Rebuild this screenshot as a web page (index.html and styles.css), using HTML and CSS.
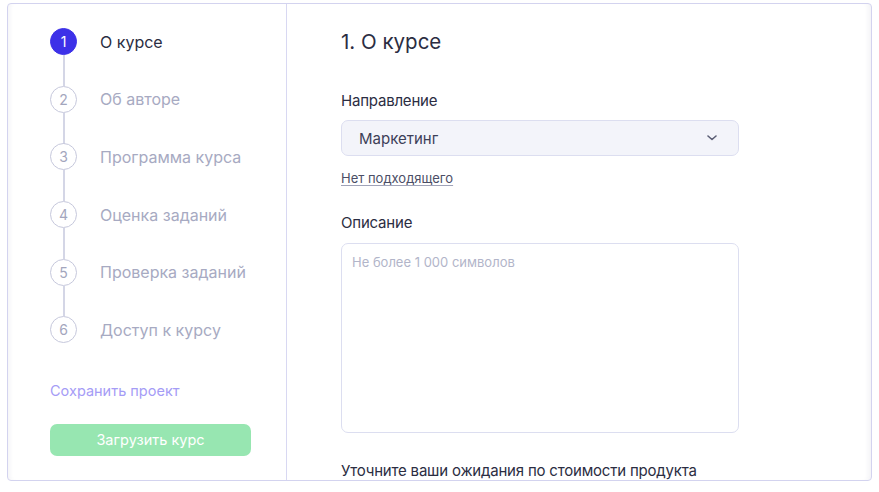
FILE: index.html
```html
<!DOCTYPE html>
<html lang="ru">
<head>
<meta charset="utf-8">
<link rel="stylesheet" href="styles.css">
</head>
<body>
<div class="card">
  <aside class="sidebar">
    <ol class="steps">
      <li class="step active"><span class="num">1</span><span class="label">О курсе</span></li>
      <li class="step"><span class="num">2</span><span class="label">Об авторе</span></li>
      <li class="step"><span class="num">3</span><span class="label">Программа курса</span></li>
      <li class="step"><span class="num">4</span><span class="label">Оценка заданий</span></li>
      <li class="step"><span class="num">5</span><span class="label">Проверка заданий</span></li>
      <li class="step last"><span class="num">6</span><span class="label">Доступ к курсу</span></li>
    </ol>
    <a class="save">Сохранить проект</a>
    <button class="upload">Загрузить курс</button>
  </aside>
  <main class="main">
    <h1 class="title">1. О курсе</h1>
    <div class="field-label first">Направление</div>
    <div class="select">
      <span>Маркетинг</span>
      <svg class="chev" width="10" height="6" viewBox="0 0 10 6"><path d="M1 1l4 3.5L9 1" fill="none" stroke="#5b5e75" stroke-width="1.6" stroke-linecap="round" stroke-linejoin="round"/></svg>
    </div>
    <a class="none">Нет подходящего</a>
    <div class="field-label desc">Описание</div>
    <div class="textarea">Не более 1 000 символов</div>
    <div class="field-label price">Уточните ваши ожидания по стоимости продукта</div>
  </main>
</div>
</body>
</html>
```

FILE: styles.css
```css
* { box-sizing: border-box; }
html, body { margin: 0; padding: 0; background: #fff; }
body {
  font-family: Inter, "Open Sans", "Noto Sans", sans-serif;
  color: #2b2d42;
  padding: 3px 8px 0 7px;
}
.card {
  width: 865px;
  height: 478px;
  border: 1px solid #d3d3ef;
  border-radius: 4px;
  display: flex;
  overflow: hidden;
  box-shadow: inset 5px 0 4px -3px rgba(40,40,90,0.05), inset -6px 0 4px -3px rgba(40,40,90,0.05);
}
.sidebar {
  width: 279px;
  flex: none;
  border-right: 1px solid #d8d8f2;
  padding: 9px 0 0 42px;
  display: flex;
  flex-direction: column;
}
.steps { list-style: none; margin: 0; padding: 0; }
.step {
  position: relative;
  display: flex;
  align-items: center;
  height: 57.6px;
}
.step::after {
  content: "";
  position: absolute;
  left: 13px;
  top: 42px;
  width: 1.5px;
  height: 31px;
  background: #d4d6e6;
}
.step.last::after { display: none; }
.num {
  width: 27px;
  height: 27px;
  border-radius: 50%;
  border: 1.5px solid #c6c8dc;
  color: #a3a6bd;
  font-size: 14px;
  display: flex;
  align-items: center;
  justify-content: center;
  flex: none;
}
.label {
  margin-left: 23px;
  font-size: 16px;
  color: #a7aac2;
}
.active .num { background: #3d31e8; border-color: #3d31e8; color: #fff; }
.active .label { color: #2b2d42; }
.save {
  margin-top: 22px;
  font-size: 14.5px;
  color: #a59cf6;
  line-height: 20px;
}
.upload {
  margin-top: 23px;
  width: 201px;
  height: 32px;
  border: none;
  border-radius: 7px;
  background: #97e6b1;
  color: #fff;
  font-family: inherit;
  font-size: 14.5px;
  padding: 0;
}
.main {
  flex: 1;
  padding: 23px 0 0 54px;
}
.title {
  margin: 0;
  font-size: 20.5px;
  font-weight: 400;
  line-height: 30px;
  color: #2b2d42;
}
.field-label {
  font-size: 15px;
  line-height: 20px;
  letter-spacing: -0.2px;
  color: #2b2d42;
}
.field-label.first { margin-top: 34px; }
.select {
  margin-top: 9px;
  width: 398px;
  height: 36px;
  background: #f3f4fa;
  border: 1px solid #dcdef0;
  border-radius: 7px;
  display: flex;
  align-items: center;
  justify-content: space-between;
  padding: 0 21px 0 17px;
  font-size: 15px;
  color: #3d4058;
}
.none {
  display: inline-block;
  margin-top: 14px;
  font-size: 13px;
  line-height: 16px;
  color: #4b4e66;
  text-decoration: underline;
  text-decoration-color: #a0a3b8;
  text-underline-offset: 2px;
}
.field-label.desc { margin-top: 26px; }
.textarea {
  margin-top: 10px;
  width: 398px;
  height: 190px;
  border: 1px solid #dcdef0;
  border-radius: 7px;
  padding: 10px 10px;
  font-size: 13px;
  line-height: 16px;
  color: #b2b5c9;
}
.field-label.price { margin-top: 28px; }
```
